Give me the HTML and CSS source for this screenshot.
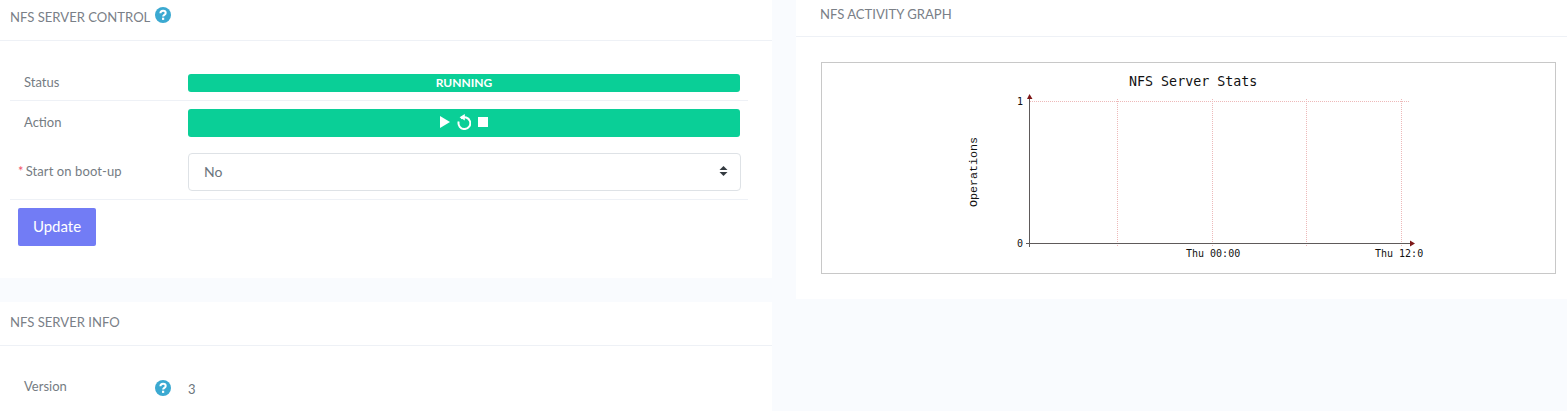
FILE: index.html
```html
<!DOCTYPE html>
<html lang="en">
<head>
  <meta charset="UTF-8" />
  <title>NFS Server</title>
  <link rel="stylesheet" href="styles.css">
</head>
<body>
  <div class="columns">
    <div class="column">
      <!-- Server control -->
      <div class="card control-card">
        <div class="card-header">
          <span class="card-title">NFS SERVER CONTROL</span>
          <svg class="help" viewBox="0 0 16 16"><circle cx="8" cy="8" r="8" fill="#3ba9d1"/><path d="M5.4 6.2c0-1.6 1.2-2.5 2.7-2.5s2.6.9 2.6 2.2c0 1.9-2.6 1.9-2.6 3.6" fill="none" stroke="#fff" stroke-width="2"/><rect x="7" y="10.7" width="2.2" height="2.2" fill="#fff"/></svg>
        </div>
        <div class="card-body">
          <div class="row status-row">
            <div class="row-label">Status</div>
            <div class="status-bar">RUNNING</div>
          </div>
          <div class="row action-row">
            <div class="row-label">Action</div>
            <div class="action-bar">
              <svg class="action-icon" viewBox="0 0 10 12"><path d="M0 0 10 6 0 12Z" fill="#fff"/></svg>
              <svg class="action-icon restart" viewBox="0 0 14 16"><path d="M3.9 4.4A5.9 5.9 0 1 1 1.7 7.6" fill="none" stroke="#fff" stroke-width="2"/><path d="M7.8 0V6.4L2.6 3.2Z" fill="#fff"/></svg>
              <svg class="action-icon stop" viewBox="0 0 10 10"><rect width="10" height="10" fill="#fff"/></svg>
            </div>
          </div>
          <div class="row boot-row">
            <div class="row-label boot-label"><span class="required">*</span>Start on boot-up</div>
            <div class="fake-select">
              <span>No</span>
              <svg class="select-arrows" viewBox="0 0 9 10"><path d="M4.5 0 8.5 4H0.5ZM4.5 10 0.5 6H8.5Z" fill="#343a40"/></svg>
            </div>
          </div>
          <button class="update-btn">Update</button>
        </div>
      </div>

      <!-- Server info -->
      <div class="card info-card">
        <div class="card-header info-header">
          <span class="card-title">NFS SERVER INFO</span>
        </div>
        <div class="card-body">
          <div class="info-row">
            <div class="info-label">Version</div>
            <svg class="help" viewBox="0 0 16 16"><circle cx="8" cy="8" r="8" fill="#3ba9d1"/><path d="M5.4 6.2c0-1.6 1.2-2.5 2.7-2.5s2.6.9 2.6 2.2c0 1.9-2.6 1.9-2.6 3.6" fill="none" stroke="#fff" stroke-width="2"/><rect x="7" y="10.7" width="2.2" height="2.2" fill="#fff"/></svg>
            <div class="info-value">3</div>
          </div>
        </div>
      </div>
    </div>

    <div class="column">
      <!-- Activity graph -->
      <div class="card graph-card">
        <div class="card-header graph-header">
          <span class="card-title">NFS ACTIVITY GRAPH</span>
        </div>
        <div class="graph-body">
          <svg class="graph" viewBox="0 0 733 210">
            <g stroke="#edb9b9" stroke-width="1" stroke-dasharray="1 1" fill="none">
              <path d="M208 38.5H588"/>
              <path d="M295.5 36V183"/>
              <path d="M390.5 36V183"/>
              <path d="M484.5 36V183"/>
              <path d="M579.5 36V183"/>
            </g>
            <path d="M207.5 36V184M204 180.5H588" stroke="#5e5a5a" stroke-width="1" fill="none"/>
            <path d="M205 36 207.5 31 210.5 36ZM588 177.5 593 180.5 588 183.5Z" fill="#7e1818"/>
            <g class="graph-text">
              <text x="307" y="23" class="graph-title">NFS Server Stats</text>
              <text x="195" y="42">1</text>
              <text x="195" y="184">0</text>
              <text x="364" y="194">Thu 00:00</text>
              <text x="553" y="194">Thu 12:0</text>
              <text transform="translate(155 144) rotate(-90)" class="graph-axis">Operations</text>
            </g>
          </svg>
        </div>
      </div>
    </div>
  </div>
</body>
</html>
```

FILE: styles.css
```css
* {
  box-sizing: border-box;
}

html, body {
  height: 100%;
}

body {
  margin: 0;
  overflow: hidden;
  font-family: 'Lato', 'Noto Sans', sans-serif;
  background-color: #f9fbfe;
  color: #6c757d;
  font-size: 13px;
}

.columns {
  display: flex;
  gap: 24px;
}

.column {
  width: 772px;
}

.column:last-child {
  width: 771px;
}

.card {
  background-color: white;
}

.control-card {
  margin-bottom: 24px;
}

.card-header {
  height: 41px;
  padding: 7px 10px 0;
  display: flex;
  align-items: flex-start;
  gap: 5px;
  border-bottom: 1px solid #eef1f6;
}

.card-title {
  font-size: 13.1px;
  line-height: 20px;
  color: #7a8087;
}

.help {
  width: 16px;
  height: 16px;
  flex: none;
}

.info-header {
  height: 44px;
  padding-top: 10px;
}

.graph-header {
  height: 37px;
  padding: 4px 24px 0;
}

/* Form rows */
.card-body {
  padding: 23px 24px 32px 10px;
}

.row {
  display: grid;
  grid-template-columns: 178px 552px;
  align-items: center;
}

.status-row {
  padding: 10px 0 8px;
  border-bottom: 1px solid #eef1f6;
}

.action-row {
  padding: 8px 0 16px;
}

.boot-row {
  padding-bottom: 8px;
  grid-template-columns: 178px 553px;
  border-bottom: 1px solid #eef1f6;
}

.row-label {
  padding-left: 14px;
  line-height: 18px;
  color: #757c83;
}

.status-row .row-label {
  margin-top: -2px;
}

.action-row .row-label {
  margin-top: -2px;
}

.boot-label {
  padding-left: 8px;
  margin-top: -2px;
  letter-spacing: 0.1px;
}

.required {
  color: #f1556c;
  margin-right: 2px;
}

.status-bar {
  height: 18px;
  line-height: 18px;
  border-radius: 3px;
  background-color: #0acf97;
  color: white;
  font-size: 12px;
  font-weight: 700;
  text-align: center;
}

.action-bar {
  height: 28px;
  padding-bottom: 2px;
  border-radius: 3px;
  background-color: #0acf97;
  display: flex;
  justify-content: center;
  align-items: center;
  gap: 7px;
}

.action-icon {
  width: 10px;
  height: 12px;
}

.action-icon.restart {
  width: 14px;
  height: 16px;
}

.action-icon.stop {
  height: 10px;
}

.fake-select {
  height: 38px;
  padding: 0 12px 2px 15px;
  border: 1px solid #dee2e6;
  border-radius: 4px;
  display: flex;
  align-items: center;
  justify-content: space-between;
  font-size: 14px;
  color: #6c757d;
}

.select-arrows {
  width: 9px;
  height: 10px;
}

.update-btn {
  display: block;
  width: 78px;
  height: 38px;
  margin: 8px 0 0 8px;
  padding: 0 0 3px;
  border: none;
  border-radius: 2px;
  background-color: #727cf5;
  color: white;
  font-family: inherit;
  font-size: 15px;
}

/* Info */
.info-row {
  display: flex;
  align-items: center;
  padding: 9px 0 0 14px;
}

.info-label {
  width: 131px;
  margin-top: -4px;
  line-height: 18px;
  color: #757c83;
}

.info-value {
  margin-left: 17px;
  padding-top: 3px;
  font-size: 13px;
}

/* Graph */
.graph-body {
  padding: 25px 11px 25px 25px;
}

.graph {
  display: block;
  width: 735px;
  height: 212px;
  border: 1px solid #c8c8c8;
}

.graph-text text {
  font-family: 'DejaVu Sans Mono', monospace;
  font-size: 10px;
  fill: #111;
}

.graph-text .graph-title {
  font-size: 13.33px;
}

.graph-text .graph-axis {
  font-family: 'Liberation Mono', monospace;
  font-size: 11.67px;
}
```
